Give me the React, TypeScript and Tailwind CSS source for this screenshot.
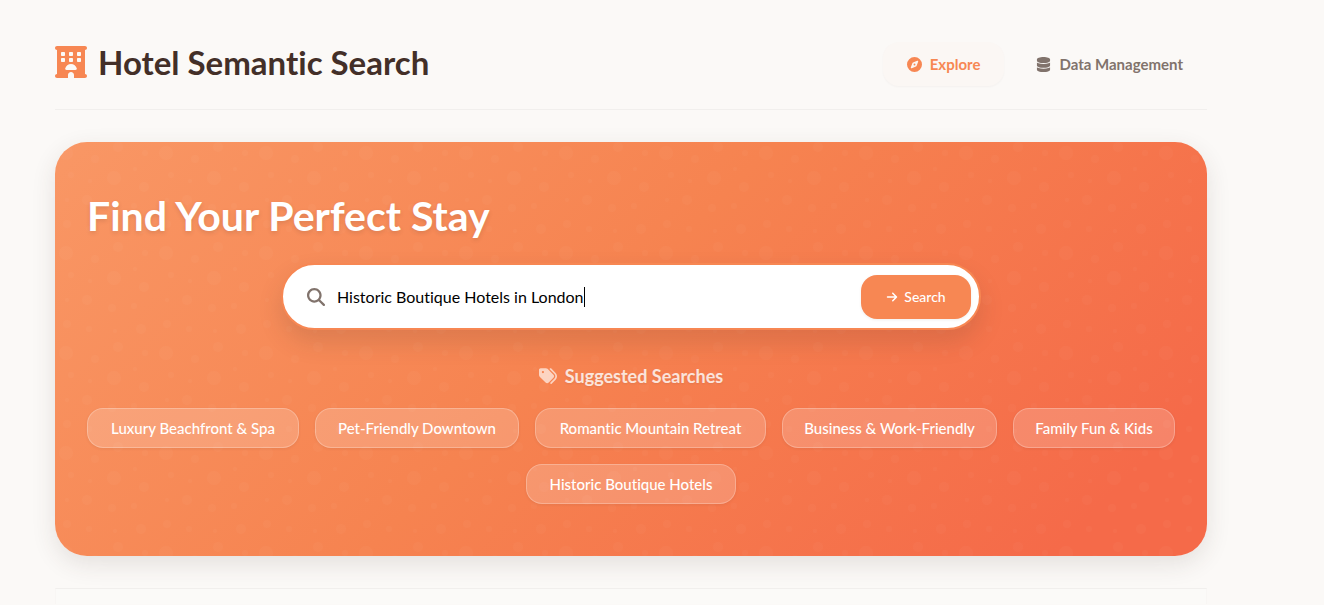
import { useState } from 'react';
import type { FormEvent } from 'react';
import {
  FaArrowRight,
  FaCompass,
  FaDatabase,
  FaHotel,
  FaMagnifyingGlass,
  FaTags,
} from 'react-icons/fa6';

const suggestions = [
  { label: 'Luxury Beachfront & Spa', width: 'w-[212px]' },
  { label: 'Pet-Friendly Downtown', width: 'w-[204px]' },
  { label: 'Romantic Mountain Retreat', width: 'w-[231px]' },
  { label: 'Business & Work-Friendly', width: 'w-[215px]' },
  { label: 'Family Fun & Kids', width: 'w-[162px]' },
  { label: 'Historic Boutique Hotels', width: 'w-[210px]' },
];

// Center x, center y and radius of each bubble in a 100px tile.
const bubbles = [
  [11, 11, 7], [59, 36, 7], [16, 33, 3], [79, 64, 3], [34, 87, 3], [90, 11, 3],
  [12, 82, 4], [40, 17, 4], [63, 5, 5], [57, 66, 4], [86, 87, 5], [32, 58, 5],
  [89, 45, 5], [80, 27, 2], [60, 89, 2], [35, 39, 2], [12, 58, 2],
];

function BubblePattern() {
  return (
    <svg aria-hidden="true" className="pointer-events-none absolute inset-0 h-full w-full">
      <defs>
        <pattern id="bubbles" width="100" height="100" patternUnits="userSpaceOnUse">
          {bubbles.map(([x, y, r]) => (
            <circle key={`${x}-${y}`} cx={x} cy={y} r={r} fill="#fff" fillOpacity="0.025" />
          ))}
        </pattern>
      </defs>
      <rect width="100%" height="100%" fill="url(#bubbles)" />
    </svg>
  );
}

function Header() {
  return (
    <header className="flex items-end justify-between border-b border-[#f1efed] pb-[23px]">
      <h1 className="flex items-center gap-[11px] text-[33px] leading-12 font-bold text-[#432f28]">
        <FaHotel className="size-8 text-[#f78753]" />
        Hotel Semantic Search
      </h1>
      <nav className="flex gap-2 text-[15px] leading-5">
        <a
          href="#explore"
          aria-current="page"
          className="flex items-center gap-2 rounded-2xl bg-[#fbf7f4] px-6 py-3 font-bold text-[#f78753] shadow-[0_1px_2px_rgba(67,47,40,0.04)]"
        >
          <FaCompass className="size-[15px]" />
          Explore
        </a>
        <a
          href="#data"
          className="flex items-center gap-2 rounded-2xl px-6 py-3 font-bold text-[#81736c]"
        >
          <FaDatabase className="size-[15px]" />
          Data Management
        </a>
      </nav>
    </header>
  );
}

function SearchForm() {
  const [query, setQuery] = useState('Historic Boutique Hotels in London');
  const submit = (event: FormEvent) => event.preventDefault();

  return (
    <form
      role="search"
      onSubmit={submit}
      className="mx-auto flex w-full max-w-[700px] items-center rounded-[34px] border-2 border-[#f78753] bg-white pt-2.5 pr-2 pb-[9px] pl-6 shadow-[0_12px_24px_rgba(67,47,40,0.15)]"
    >
      <label className="flex min-w-0 flex-1 items-center">
        <FaMagnifyingGlass className="size-[18px] shrink-0 text-[#81736c]" />
        <input
          type="text"
          aria-label="Search hotels"
          value={query}
          onChange={(event) => setQuery(event.target.value)}
          className="ml-3 field-sizing-content max-w-full min-w-0 text-base text-black caret-transparent outline-none"
        />
        <span aria-hidden="true" className="h-5 w-px bg-black" />
      </label>
      <button
        type="submit"
        className="flex h-11 w-[110px] shrink-0 items-center justify-center gap-1.5 rounded-2xl bg-[#f78753] text-sm font-medium text-white shadow-[0_1px_3px_rgba(67,47,40,0.08)]"
      >
        <FaArrowRight className="size-3" />
        Search
      </button>
    </form>
  );
}

function Hero() {
  return (
    <section className="relative overflow-hidden rounded-[32px] bg-linear-[135deg,#f99765_0%,#f68350_46%,#f56a49_90%] px-8 pt-[50px] pb-[52px]">
      <BubblePattern />
      <div className="relative">
        <h2 className="mb-[23px] text-[41px] leading-12 font-bold text-white [text-shadow:0_2px_4px_rgba(67,47,40,0.15)]">
          Find Your Perfect Stay
        </h2>
        <SearchForm />
        <h3 className="mt-8 mb-[18px] flex items-center justify-center gap-2 text-lg leading-7 font-bold text-white/80 [text-shadow:0_1px_2px_rgba(67,47,40,0.1)]">
          <FaTags className="size-[18px] text-white/65" />
          Suggested Searches
        </h3>
        <div className="flex flex-wrap justify-center gap-4">
          {suggestions.map(({ label, width }) => (
            <button
              key={label}
              type="button"
              className={`${width} h-10 rounded-2xl border border-white/25 bg-white/18 text-[15px] font-medium whitespace-nowrap text-white shadow-[0_1px_3px_rgba(67,47,40,0.08)]`}
            >
              {label}
            </button>
          ))}
        </div>
      </div>
    </section>
  );
}

export default function App() {
  return (
    <div className="min-h-screen bg-[#fbf9f7] font-['Lato',sans-serif] [font-variant-ligatures:none]">
      <main className="mr-[117px] ml-[55px] pt-[38px]">
        <Header />
        <div className="mt-8 rounded-[32px] shadow-[0_8px_24px_rgba(67,47,40,0.12)]">
          <Hero />
        </div>
        <section
          aria-label="Results"
          className="mt-8 h-4 border border-b-0 border-x-[#f8f6f4] border-t-[#f1efed] bg-[#fbfaf8]"
        />
      </main>
    </div>
  );
}
